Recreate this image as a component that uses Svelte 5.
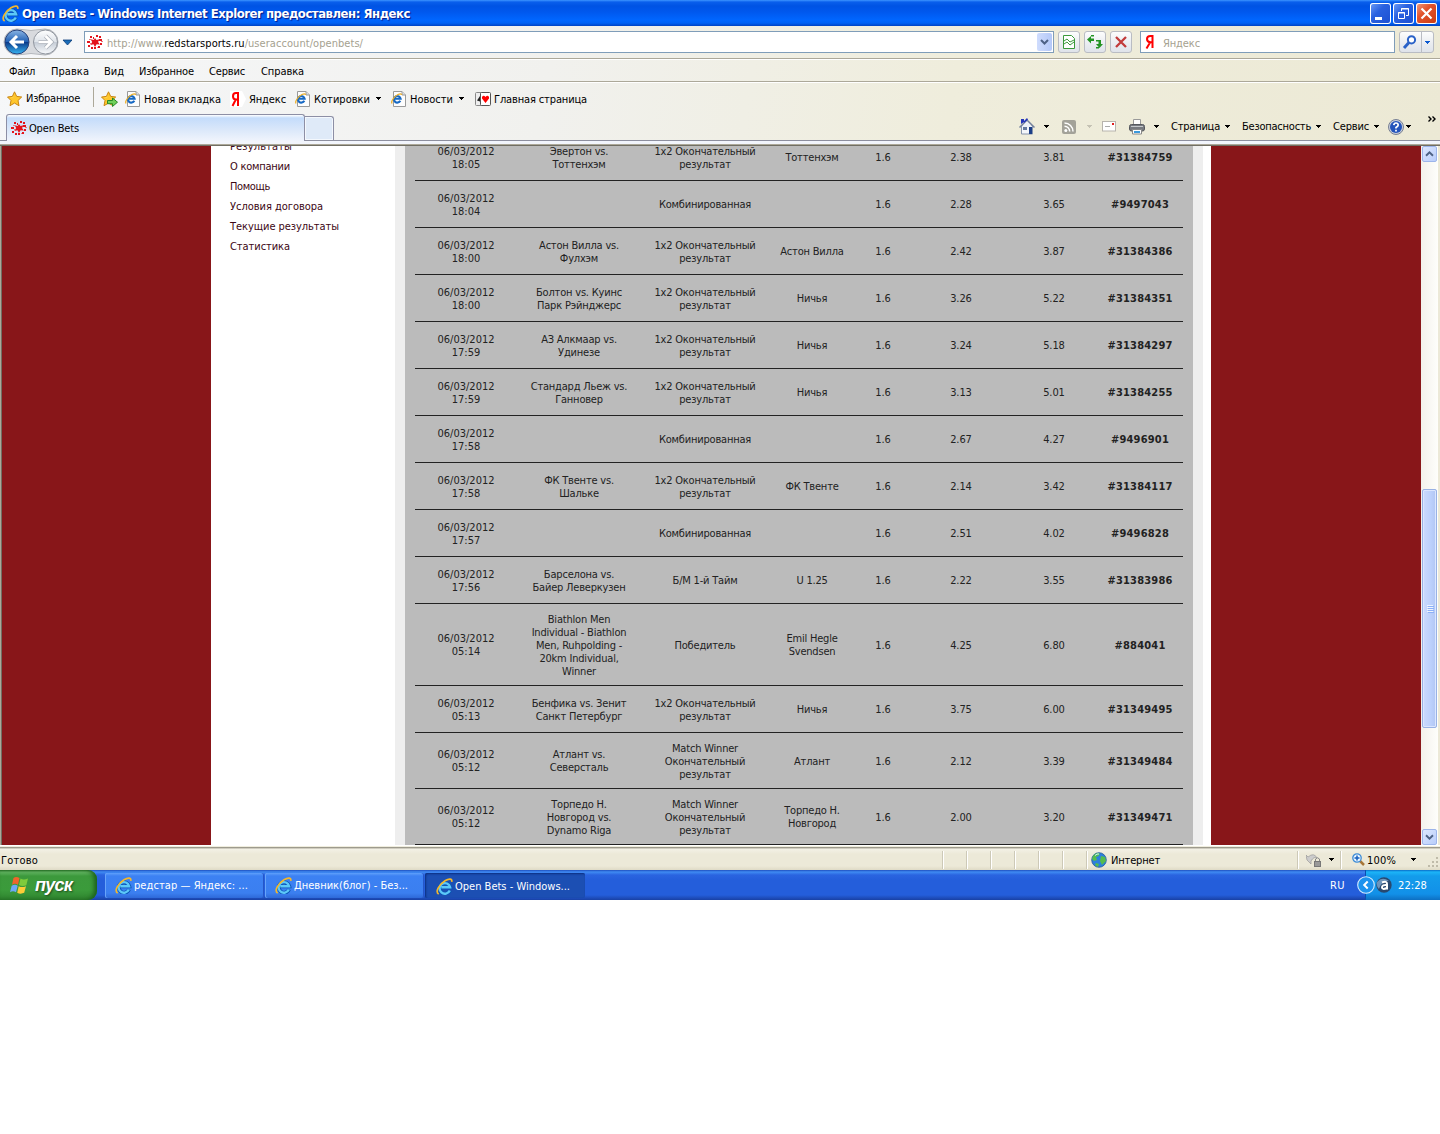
<script>
    // spreads a label over a known width
    function fit(node, width) {
        const range = document.createRange();
        range.selectNodeContents(node);
        const natural = range.getBoundingClientRect().width;
        node.style.letterSpacing = (width - natural) / node.textContent.length + 'px';
    }

    const menu = [
        { text: 'Файл', width: 26, gap: 9 },
        { text: 'Правка', width: 38, gap: 16 },
        { text: 'Вид', width: 20, gap: 15 },
        { text: 'Избранное', width: 55, gap: 15 },
        { text: 'Сервис', width: 36, gap: 15 },
        { text: 'Справка', width: 43, gap: 16 },
    ];

    const favorites = [
        { icon: 'page', text: 'Новая вкладка', width: 77, gap: 7 },
        { icon: 'yandex', text: 'Яндекс', width: 37, gap: 9 },
        { icon: 'page', text: 'Котировки', width: 56, gap: 9, arrow: true },
        { icon: 'page', text: 'Новости', width: 43, gap: 10, arrow: true },
        { icon: 'cards', text: 'Главная страница', width: 93, gap: 11 },
    ];

    const commands = [
        { text: 'Страница', width: 49, gap: 12 },
        { text: 'Безопасность', width: 69, gap: 12 },
        { text: 'Сервис', width: 36, gap: 12 },
    ];

    const sidebar = [
        { text: 'Результаты', width: 62 },
        { text: 'О компании', width: 60 },
        { text: 'Помощь', width: 40 },
        { text: 'Условия договора', width: 93 },
        { text: 'Текущие результаты', width: 109 },
        { text: 'Статистика', width: 60 },
    ];

    const tasks = [
        { text: 'редстар — Яндекс: ...', width: 114 },
        { text: 'Дневник(блог) - Без...', width: 114 },
        { text: 'Open Bets - Windows...', width: 115, active: true },
    ];

    const result = '1x2 Окончательный\nрезультат';
    const winner = 'Match Winner\nОкончательный\nрезультат';
    const combo = 'Комбинированная';

    const bets = [
        ['18:05', 'Эвертон vs.\nТоттенхэм', result, 'Тоттенхэм', '2.38', '3.81', '31384759'],
        ['18:04', '', combo, '', '2.28', '3.65', '9497043'],
        ['18:00', 'Астон Вилла vs.\nФулхэм', result, 'Астон Вилла', '2.42', '3.87', '31384386'],
        ['18:00', 'Болтон vs. Куинс\nПарк Рэйнджерс', result, 'Ничья', '3.26', '5.22', '31384351'],
        ['17:59', 'АЗ Алкмаар vs.\nУдинезе', result, 'Ничья', '3.24', '5.18', '31384297'],
        ['17:59', 'Стандард Льеж vs.\nГанновер', result, 'Ничья', '3.13', '5.01', '31384255'],
        ['17:58', '', combo, '', '2.67', '4.27', '9496901'],
        ['17:58', 'ФК Твенте vs.\nШальке', result, 'ФК Твенте', '2.14', '3.42', '31384117'],
        ['17:57', '', combo, '', '2.51', '4.02', '9496828'],
        ['17:56', 'Барселона vs.\nБайер Леверкузен', 'Б/М 1-й Тайм', 'U 1.25', '2.22', '3.55', '31383986'],
        ['05:14', 'Biathlon Men\nIndividual - Biathlon\nMen, Ruhpolding -\n20km Individual,\nWinner', 'Победитель', 'Emil Hegle\nSvendsen', '4.25', '6.80', '884041'],
        ['05:13', 'Бенфика vs. Зенит\nСанкт Петербург', result, 'Ничья', '3.75', '6.00', '31349495'],
        ['05:12', 'Атлант vs.\nСеверсталь', winner, 'Атлант', '2.12', '3.39', '31349484'],
        ['05:12', 'Торпедо Н.\nНовгород vs.\nDynamo Riga', winner, 'Торпедо Н.\nНовгород', '2.00', '3.20', '31349471'],
    ];
</script>

{#snippet arrow(color = '#000')}
    <svg class="arrow" width="5" height="3" viewBox="0 0 5 3" shape-rendering="crispEdges"><path d="M0 0h5v1h-1v1h-1v1h-1v-1h-1v-1h-1z" fill={color} /></svg>
{/snippet}

{#snippet ie(size)}
    <svg width={size} height={size} viewBox="0 0 16 16">
        <path d="M13.200 11.800A5 5 0 1 1 13.500 8.900H5" fill="none" stroke="#0b55b5" stroke-width="3.600" />
        <path d="M13 11.800A5 5 0 1 1 13.300 8.700H5" fill="none" stroke="#5cc8f8" stroke-width="2.200" />
        <path d="M2.500 15.200C-1 13 3 6 8.500 2.600 12 .4 15.500.2 14.800 3.600" fill="none" stroke="#f3b72c" stroke-width="1.600" />
    </svg>
{/snippet}

{#snippet page()}
    <svg width="16" height="16" viewBox="0 0 16 16">
        <path d="M2.500.5h8.500l3.500 3.500v11.500h-12z" fill="#fdfdfd" stroke="#9a9a9a" />
        <path d="M11 .5v3.500h3.500" fill="#ddd" stroke="#9a9a9a" />
        <path d="M9.300 9.800A3.300 3.300 0 1 1 9.600 7.700H3.500" fill="none" stroke="#1769c4" stroke-width="2.100" />
        <path d="M1 12.500C-.3 10.500 3 5.500 7 3.500 9 2.500 10.500 2.500 10.500 4" fill="none" stroke="#eeb02a" stroke-width="1.300" />
    </svg>
{/snippet}

{#snippet yandex()}
    <svg width="16" height="16" viewBox="0 0 16 16">
        <path d="M0 0h12l4 8-4 8H0z" fill="#fff" />
        <path d="M8 1v14M8.500 2H6Q3 2 3 5.200T6 8.500h2.500M5.800 8.500L2.500 15" fill="none" stroke="#f00" stroke-width="2" />
    </svg>
{/snippet}

{#snippet redstar()}
    <svg width="16" height="16" viewBox="0 0 16 16">
        <path d="M8 4l1.500 2 3-.8-1.400 2.800 1.700 2.500-3.200-.3L8 13l-1.500-2.800-3.200.8 1.900-2.900L3.600 5.300l3.100.7z" fill="#e3141c" />
        <path d="M3 2h2v2H3zM6 3h1v2H6zM9 1h2v2H9zM12 2h2v2h-2zM12 5h3v2h-3zM0 7h3v2H0zM1 11h2v2H1zM13 9h2v2h-2zM4 13h2v2H4zM7 13h2v2H7zM11 12h2v2h-2z" fill="#e3141c" />
        <path d="M2 5h2v1H2zM14 7h2v1h-2zM3 9h1v1H3zM10 13h1v1h-1z" fill="#e8787c" />
    </svg>
{/snippet}

{#snippet star(plus = false)}
    <svg width="17" height="16" viewBox="0 0 17 16">
        <path d="M7.500.8l2.200 4.600 5 .6-3.700 3.500 1 5.200-4.500-2.600L3 14.700 4 9.500.5 6l4.900-.6z" fill="#ffc72c" stroke="#c98512" />
        <path d="M7.500 3L6.300 6.500 3 7l3-.1z" fill="#fff3a0" />
        {#if plus}
            <path d="M6.500 9.500h5v-2.500l5 4.200-5 4.300v-2.800h-5z" fill="#71d05b" stroke="#288a28" />
        {/if}
    </svg>
{/snippet}

{#snippet cards()}
    <svg width="16" height="14" viewBox="0 0 16 14">
        <rect x=".5" y=".5" width="9" height="13" rx="1" fill="#eee" stroke="#888" />
        <path d="M5 4L2 8.500l3 1z" fill="#222" />
        <rect x="5.500" y=".5" width="10" height="13" rx="1" fill="#fff" stroke="#555" />
        <path d="M10.500 11L7 6.500V5q1.500-2.500 3.500 0 2-2.500 3.500 0v1.500z" fill="#f00" />
    </svg>
{/snippet}

<div class="desktop">
    <header class="title">
        {@render ie(17)}
        <span class="caption" use:fit={388}>Open Bets - Windows Internet Explorer предоставлен: Яндекс</span>
        <div class="controls">
            <svg width="21" height="21" viewBox="0 0 21 21"><path d="M5 14h7v3H5z" fill="#fff" /></svg>
            <svg width="21" height="21" viewBox="0 0 21 21"><path d="M8.500 8V5.500h7v7H13M8 6h8" fill="none" stroke="#fff" /><path d="M5.500 9.500h6v6h-6zM5 10h7" fill="none" stroke="#fff" /></svg>
            <svg class="close" width="21" height="21" viewBox="0 0 21 21"><path d="M5.500 5.500l10 10M15.500 5.500l-10 10" stroke="#fff" stroke-width="2.200" /></svg>
        </div>
    </header>

    <div class="toolbars">
        <div class="nav">
            <svg class="travel" width="72" height="30" viewBox="0 0 72 30">
                <defs>
                    <linearGradient id="back" x2="0" y2="1"><stop stop-color="#8bb5e4" /><stop offset=".48" stop-color="#2362b5" /><stop offset=".52" stop-color="#0b3c8c" /><stop offset="1" stop-color="#38b5f2" /></linearGradient>
                    <linearGradient id="fwd" x2="0" y2="1"><stop stop-color="#fff" /><stop offset=".48" stop-color="#dfe4ea" /><stop offset=".52" stop-color="#c5ccd6" /><stop offset="1" stop-color="#f8fafc" /></linearGradient>
                </defs>
                <path d="M17 2q14 3 28 0a13 13 0 0 1 0 26q-14-3-28 0a13 13 0 0 1 0-26z" fill="#d8dade" stroke="#b4b7bc" />
                <circle cx="17" cy="15" r="12" fill="url(#back)" stroke="#28427a" />
                <path d="M17 9l-6 6 6 6M12 15h12" fill="none" stroke="#fff" stroke-width="3" />
                <circle cx="45.500" cy="15" r="12" fill="url(#fwd)" stroke="#8f959e" />
                <path d="M45.500 9l6 6-6 6M51 15H38.500" fill="none" stroke="#a7adb6" stroke-width="4" />
                <path d="M45.500 9l6 6-6 6M51 15H38.500" fill="none" stroke="#fff" stroke-width="2.600" />
                <path d="M63 13h9l-4.500 5z" fill="#1a6cb8" stroke="#0b3c78" stroke-width=".8" />
            </svg>
            <div class="address">
                {@render redstar()}
                <span class="url" use:fit={256}>http://www.<b>redstarsports.ru</b>/useraccount/openbets/</span>
                <svg class="drop" width="15" height="18" viewBox="0 0 15 18"><path d="M4 7l3.500 3.500L11 7" fill="none" stroke="#4d6185" stroke-width="2" /></svg>
            </div>
            <div class="tool">
                <svg width="14" height="16" viewBox="0 0 14 16"><path d="M1.500 1.500h8l3 3v10h-11z" fill="#fff" stroke="#3b9a3b" /><path d="M2 7l3-2 3 3 4-2M2 10l3-2 3 3 4-3" fill="none" stroke="#3b9a3b" /></svg>
            </div>
            <div class="tool">
                <svg width="16" height="16" viewBox="0 0 16 16"><path d="M0 5.500L4 2v2.500h3v2.500H4v2.500zM4 1h3v1.500H4z" fill="#249424" /><path d="M16 10l-3.500 4L9 10h2.500V7.500H9V6h5v4zM9 13h3v1.500H9z" fill="#249424" /></svg>
            </div>
            <div class="tool">
                <svg width="14" height="14" viewBox="0 0 14 14"><path d="M2 2l10 10M12 2L2 12" stroke="#c23b3b" stroke-width="2.300" /></svg>
            </div>
            <div class="search">
                <svg width="10" height="14" viewBox="0 0 10 14"><path d="M7.500 0v13M8 1H5.500Q2 1 2 4t3.500 3.300H8M5.200 7.300L1.500 13.500" fill="none" stroke="#f00" stroke-width="2" /></svg>
                <span use:fit={37}>Яндекс</span>
            </div>
            <div class="go">
                <svg width="21" height="20" viewBox="0 0 21 20"><path d="M4 16l5-5.500" stroke="#2a62c8" stroke-width="3" /><circle cx="11.500" cy="7.800" r="3.600" fill="#fff" stroke="#2a62c8" stroke-width="2" /></svg>
                <i></i>
                {@render arrow('#0a58d0')}
            </div>
        </div>

        <div class="menu">
            {#each menu as item}
                <span style:margin-left="{item.gap}px" style:width="{item.width}px" use:fit={item.width}>{item.text}</span>
            {/each}
        </div>

        <div class="favorites">
            {@render star()}
            <span class="fav-label" use:fit={54}>Избранное</span>
            <i class="separator"></i>
            {@render star(true)}
            {#each favorites as item}
                <span class="favorite" style:margin-left="{item.gap}px">
                    {#if item.icon === 'page'}
                        {@render page()}
                    {:else if item.icon === 'yandex'}
                        {@render yandex()}
                    {:else}
                        {@render cards()}
                    {/if}
                    <span class="text" style:width="{item.width}px" use:fit={item.width}>{item.text}</span>
                    {#if item.arrow}{@render arrow()}{/if}
                </span>
            {/each}
        </div>

        <div class="tabs">
            <div class="tab">{@render redstar()}<span use:fit={50}>Open Bets</span></div>
            <div class="new-tab"></div>
            <div class="commands">
                <svg width="16" height="17" viewBox="0 0 16 17">
                    <path d="M2.500 8h11v8h-11z" fill="#f4f6fa" stroke="#8794ac" />
                    <path d="M2.500 9L8 2.500 13.500 9z" fill="#eef1f7" />
                    <path d="M.5 9.500L8 2l7.500 7.500" fill="none" stroke="#73809c" stroke-width="1.500" />
                    <path d="M2 1h3v3L2 6zM5 3l3-3 1 1.500L5 5z" fill="#2536b8" />
                    <path d="M10 9h3v7h-3z" fill="#1c3f88" /><path d="M4 9h4v3H4z" fill="#667a9e" />
                </svg>
                {@render arrow()}
                <svg class="rss" width="14" height="14" viewBox="0 0 14 14"><rect width="14" height="14" rx="2" fill="#a3a299" /><circle cx="3.800" cy="10.500" r="1.500" fill="#fff" /><path d="M2.500 6.300a5.200 5.200 0 0 1 5.200 5.200M2.500 3a8.500 8.500 0 0 1 8.500 8.500" fill="none" stroke="#fff" stroke-width="1.500" /></svg>
                {@render arrow('#c5c2b4')}
                <svg class="mail" width="14" height="11" viewBox="0 0 14 11"><rect x=".5" y=".5" width="13" height="9.500" fill="#fff" stroke="#b7b4ad" /><path d="M10 2h2v2h-2z" fill="#e02020" /><path d="M3 5.500h5" stroke="#aaa" /></svg>
                <svg class="printer" width="16" height="16" viewBox="0 0 16 16">
                    <path d="M4.500.5h7v6h-7z" fill="#fff" stroke="#999" />
                    <rect x=".5" y="5.500" width="15" height="6.500" rx="2" fill="#777a80" stroke="#55585e" />
                    <path d="M2 7.500h12" stroke="#c5c8cc" />
                    <path d="M3.500 10.500h9v4.500h-9z" fill="#fff" stroke="#888" /><path d="M5 13h6" stroke="#3c9adc" stroke-width="2" />
                </svg>
                {@render arrow()}
                {#each commands as item}
                    <span class="command" style:margin-left="{item.gap}px">
                        <span style:width="{item.width}px" use:fit={item.width}>{item.text}</span>
                        {@render arrow()}
                    </span>
                {/each}
                <svg class="help" width="16" height="16" viewBox="0 0 16 16"><circle cx="8" cy="8" r="7.500" fill="#c9cfdc" stroke="#777f92" /><circle cx="8" cy="8" r="6" fill="#2454bb" /><path d="M5.800 6.200Q6 4 8 4t2.200 2Q10.200 7.300 8 8.500v1M8 10.800v1.700" fill="none" stroke="#fff" stroke-width="1.700" /></svg>
                {@render arrow()}
                <svg class="more" width="8" height="6" viewBox="0 0 8 6"><path d="M.5.5L3 3 .5 5.500M4.500.5L7 3 4.500 5.500" fill="none" stroke="#000" stroke-width="1.400" /></svg>
            </div>
        </div>
        <div class="edge"></div>
    </div>

    <main class="viewport">
        <div class="margin left"></div>
        <nav class="sidebar">
            {#each sidebar as item}
                <a href="#top"><span use:fit={item.width}>{item.text}</span></a>
            {/each}
        </nav>
        <section class="panel">
            {#each bets as [time, event, market, pick, odds, win, id]}
                <div class="bet">
                    <span class="date">06/03/2012{'\n'}{time}</span>
                    <span>{event}</span>
                    <span>{market}</span>
                    <span>{pick}</span>
                    <span class="num">1.6</span>
                    <span class="num">{odds}</span>
                    <span class="num">{win}</span>
                    <strong>#{id}</strong>
                </div>
            {/each}
        </section>
        <div class="margin right"></div>
        <div class="scrollbar">
            <svg class="button" width="15" height="16" viewBox="0 0 15 16"><path d="M3.500 10l4-4 4 4" fill="none" stroke="#4d6185" stroke-width="2.200" /></svg>
            <div class="track">
                <div class="thumb"><i></i><i></i><i></i><i></i></div>
            </div>
            <svg class="button" width="15" height="16" viewBox="0 0 15 16"><path d="M3.500 6l4 4 4-4" fill="none" stroke="#4d6185" stroke-width="2.200" /></svg>
        </div>
    </main>

    <footer class="status">
        <span class="ready" use:fit={37}>Готово</span>
        <div class="cells">
            <i></i><i></i><i></i><i></i><i></i><i></i><i></i>
        </div>
        <svg class="globe" width="16" height="16" viewBox="0 0 16 16"><circle cx="8" cy="8" r="7.300" fill="#2d80dc" stroke="#255a9a" stroke-width=".8" /><path d="M2 4Q5 0 9 1.500L7.500 4 5 5 6 8 3 9 1 7zM10 4l4 1 1 4-4 4-2-4zM5 11l3 1-1 3-3-2z" fill="#55bd4c" /><path d="M4 3.500q2-2 4-1.500" stroke="#c9f0ff" fill="none" /></svg>
        <span class="zone" use:fit={49}>Интернет</span>
        <div class="protect">
            <svg width="16" height="16" viewBox="0 0 16 16"><path d="M1 8l4 4V9q3-5 6-3-3-6-9-1L0 3z" fill="#ccc" stroke="#999" stroke-width=".7" /><rect x="8.500" y="9.500" width="6" height="5" fill="#999" stroke="#777" /><path d="M9.500 9V7q2-2.500 4 0v2" fill="none" stroke="#888" /></svg>
            {@render arrow()}
        </div>
        <div class="zoom">
            <svg width="13" height="13" viewBox="0 0 13 13"><path d="M7.500 7.500l4.500 4.500" stroke="#a77638" stroke-width="2.500" /><circle cx="5" cy="5" r="4.200" fill="#e9f6ff" stroke="#3c8bd6" stroke-width="1.300" /><path d="M5 2.500v5M2.500 5h5" stroke="#1660c0" stroke-width="1.500" /></svg>
            <span use:fit={29}>100%</span>
            {@render arrow()}
            <svg class="grip" width="11" height="11" viewBox="0 0 11 11"><path d="M8 0h2v2H8zM4 4h2v2H4zM8 4h2v2H8zM0 8h2v2H0zM4 8h2v2H4zM8 8h2v2H8z" fill="#bfbba9" /></svg>
        </div>
    </footer>

    <div class="taskbar">
        <div class="start">
            <svg width="20" height="19" viewBox="0 0 20 19">
                <path d="M3.500 2Q6 0 9.500 2L8 8.700Q5 6.700 2 8.700z" fill="#f0642c" />
                <path d="M10.500 2.500Q13.500 4.500 18 2.500L16.300 9.300Q12.500 11 9 9z" fill="#7ecb3c" />
                <path d="M1.700 9.700Q5 8 7.700 9.700L6 16.200Q3 14.300 0 16.200z" fill="#6ea8f8" />
                <path d="M8.700 10.200Q12 12 16 10.200L14.200 16.800Q10.500 18.500 7.200 16.700z" fill="#fdcc38" />
            </svg>
            <span use:fit={37}>пуск</span>
        </div>
        <div class="tasks">
            {#each tasks as task}
                <div class="task" class:active={task.active}>
                    {@render ie(17)}
                    <span use:fit={task.width}>{task.text}</span>
                </div>
            {/each}
        </div>
        <span class="lang" use:fit={15}>RU</span>
        <div class="tray">
            <svg class="expand" width="18" height="18" viewBox="0 0 18 18"><circle cx="9" cy="9" r="8.300" fill="#1d93ee" stroke="#d5edff" stroke-width="1.100" /><path d="M10.700 5.500L7.200 9l3.500 3.500" fill="none" stroke="#fff" stroke-width="2" /></svg>
            <svg width="16" height="16" viewBox="0 0 16 16"><circle cx="8" cy="8" r="7.700" fill="#28486f" /><path d="M1 5q5-6 12-1Q6 3 3 12 0 9 1 5z" fill="#6e94bb" /><path d="M6 5.500q5-2 5 1.500v5.500M11 8Q6 7.500 6 10.300T11 11" fill="none" stroke="#fff" stroke-width="2" /></svg>
            <span use:fit={29}>22:28</span>
        </div>
    </div>
</div>

<style>
    :global(body) {
        background: #fff;
    }
    .desktop {
        width: 1440px;
        height: 1134px;
        overflow: hidden;
        font: 11px/13px "DejaVu Sans Condensed", "DejaVu Sans", sans-serif;
        font-stretch: condensed;
        color: #000;
    }
    .desktop * {
        box-sizing: border-box;
    }
    svg {
        display: block;
        flex: none;
    }
    span {
        white-space: nowrap;
    }
    .title {
        display: flex;
        align-items: center;
        height: 26px;
        padding: 0 3px 0 2px;
        background: linear-gradient(#3d95ff 0, #0a5fec 2px, #0053e4 6px, #0058ee 12px, #0066ff 20px, #0062f5 23px, #0043c4 26px);
    }
    .caption {
        margin-left: 3px;
        color: #fff;
        font-size: 13px;
        font-weight: bold;
        text-shadow: 1px 1px 1px #0a1883;
    }
    .controls {
        display: flex;
        gap: 2px;
        margin-left: auto;
    }
    .controls svg {
        border-radius: 3px;
        box-shadow: inset 0 0 0 1px #fff;
        background: linear-gradient(135deg, #6f9ff8, #2a61e0 40%, #1d4fd0);
    }
    .controls .close {
        background: linear-gradient(135deg, #f0a084, #e2532c 40%, #c83a10);
    }
    .toolbars {
        background: linear-gradient(100deg, #f6f7f9 0, #f1f1ee 38%, #efeddc 66%, #ece9d5 100%);
    }
    .nav {
        display: flex;
        align-items: center;
        height: 33px;
        border-bottom: 1px solid #aca899;
    }
    .travel {
        margin: 0 12px 0 0;
    }
    .address, .search {
        display: flex;
        align-items: center;
        height: 22px;
        border: 1px solid #7f9db9;
        background: #fff;
        color: #a5a190;
    }
    .address {
        width: 970px;
        padding: 0 0 0 2px;
    }
    .url {
        margin: 2px 0 0 4px;
    }
    .url b {
        color: #000;
        font-weight: normal;
    }
    .drop {
        margin: 0 1px 0 auto;
        border-radius: 2px;
        background: linear-gradient(90deg, #cfdcfd, #b4c8f8);
    }
    .tool {
        display: flex;
        align-items: center;
        justify-content: center;
        width: 22px;
        height: 22px;
        margin-left: 4px;
        border: 1px solid #b9bcc3;
        border-radius: 3px;
        background: linear-gradient(#fdfdfd, #eceef2 50%, #dfe3ea);
    }
    .search {
        width: 255px;
        margin-left: 8px;
        padding-left: 4px;
    }
    .search span {
        margin: 2px 0 0 8px;
    }
    .go {
        display: flex;
        align-items: center;
        width: 35px;
        height: 22px;
        margin-left: 4px;
        border: 1px solid #b9bcc3;
        border-radius: 3px;
        background: linear-gradient(#fdfdfd, #eceef2 50%, #dfe3ea);
    }
    .go i {
        width: 1px;
        height: 20px;
        margin-right: 3px;
        background: #b9bcc3;
    }
    .menu {
        display: flex;
        align-items: center;
        height: 23px;
        padding-top: 2px;
        border-top: 1px solid #fff;
        border-bottom: 1px solid #aca899;
    }
    .favorites {
        display: flex;
        align-items: center;
        height: 32px;
        padding-left: 7px;
        border-top: 1px solid #fff;
    }
    .fav-label {
        width: 54px;
        margin: -1px 0 0 2px;
    }
    .separator {
        width: 1px;
        height: 20px;
        margin: -3px 7px 0 13px;
        background: #aca899;
    }
    .favorite {
        display: flex;
        align-items: center;
    }
    .favorite .text {
        margin: 2px 0 0 3px;
    }
    .favorite .arrow {
        margin-left: 6px;
    }
    .tabs {
        display: flex;
        align-items: flex-end;
        height: 27px;
        padding-left: 6px;
        border-bottom: 1px solid #8d8f9f;
    }
    .tab {
        display: flex;
        align-items: center;
        width: 299px;
        height: 27px;
        margin-bottom: -1px;
        padding-left: 4px;
        border: 1px solid #8d8fa5;
        border-bottom: 0;
        border-radius: 3px 3px 0 0;
        background: linear-gradient(#fff 0, #c4dcfb 3px, #dbe8fa 15px, #f0f4fc);
    }
    .tab span {
        margin-left: 2px;
    }
    .new-tab {
        width: 29px;
        height: 24px;
        border: 1px solid #8d8fa5;
        border-left: 0;
        border-bottom: 0;
        border-radius: 0 3px 0 0;
        background: #dfeaf8;
        box-shadow: inset 0 0 0 1px #f4f8fd;
    }
    .commands {
        display: flex;
        align-items: center;
        width: 421px;
        height: 27px;
        margin-left: auto;
    }
    .commands > .arrow {
        margin-left: 9px;
    }
    .rss {
        margin-left: 13px;
    }
    .rss + .arrow {
        margin-left: 11px;
    }
    .commands .mail {
        margin-left: 10px;
    }
    .printer {
        margin-left: 13px;
    }
    .command {
        display: flex;
        align-items: center;
    }
    .command .arrow {
        margin-left: 5px;
    }
    .help {
        margin-left: 9px;
    }
    .commands .help + .arrow {
        margin-left: 2px;
    }
    .more {
        margin: -15px 0 0 17px;
    }
    .edge {
        height: 5px;
        border-bottom: 1px solid #716f64;
        background: linear-gradient(#f2f5fc 3px, #aca899 3px);
    }
    .viewport {
        display: flex;
        height: 699px;
        overflow: hidden;
        border-left: 1px solid #aca899;
        background: #fff;
    }
    .margin {
        width: 210px;
        background: #881619;
    }
    .left {
        border-left: 1px solid #716f64;
    }
    .sidebar {
        width: 184px;
        margin-top: -9px;
        padding-left: 19px;
    }
    .sidebar a {
        display: block;
        height: 20px;
        line-height: 20px;
        color: #3c0714;
        text-decoration: none;
    }
    .panel {
        width: 808px;
        margin-right: 8px;
        padding: 0 10px;
        border: solid #eee;
        border-width: 0 10px;
        background: #bbb;
        color: #222;
    }
    .bet {
        display: grid;
        grid-template-columns: 102px 124px 128px 86px 56px 100px 86px 86px;
        align-items: center;
        min-height: 47px;
        padding: 8.5px 0 7.5px;
        border-bottom: 1px solid #222;
        text-align: center;
    }
    .bet:first-child {
        margin-top: -12px;
    }
    .bet span {
        white-space: pre;
        letter-spacing: -0.2px;
    }
    .bet .date {
        letter-spacing: 0;
    }
    .bet .num {
        letter-spacing: -0.1px;
    }
    .bet strong {
        letter-spacing: 0.2px;
    }
    .scrollbar {
        display: flex;
        flex-direction: column;
        align-items: center;
        width: 19px;
        border-right: 2px solid #ece9d8;
        background: linear-gradient(90deg, #f3f1ec, #fefefb);
    }
    .button {
        border: 1px solid #9cb4ea;
        border-radius: 2px;
        background: linear-gradient(135deg, #dce7ff, #b9cdfb);
    }
    .track {
        flex: 1;
        width: 15px;
    }
    .thumb {
        display: flex;
        flex-direction: column;
        align-items: center;
        justify-content: center;
        gap: 1px;
        height: 239px;
        margin-top: 327px;
        border: 1px solid #98b1e4;
        border-radius: 2px;
        background: linear-gradient(90deg, #cbdafd, #bcd0fc 60%, #b2c6f3);
        box-shadow: inset 0 0 0 1px #dbe6ff;
    }
    .thumb i {
        width: 6px;
        height: 1px;
        background: #eef4fe;
        box-shadow: 1px 1px #8cb0f8;
    }
    .status {
        display: flex;
        align-items: center;
        height: 25px;
        padding-top: 4px;
        background: linear-gradient(#fff 1px, #f3f1e4 1px, #ece9d8 2px, #8f8d80 2px, #aca899 3px, #f3f1e6 4px, #ece9d8 9px, #ece9d8 21px, #dedac6 25px);
    }
    .status span {
        margin-top: 1px;
    }
    .ready {
        width: 37px;
        margin-left: 1px;
    }
    .cells {
        display: flex;
        gap: 22px;
        margin-left: 904px;
    }
    .cells i {
        width: 2px;
        height: 18px;
        border-left: 1px solid #cdc9b7;
        border-right: 1px solid #fff;
    }
    .globe {
        margin-left: 3px;
    }
    .zone {
        width: 49px;
        margin-left: 4px;
    }
    .protect, .zoom {
        display: flex;
        align-items: center;
        height: 18px;
        border-left: 1px solid #cdc9b7;
        box-shadow: inset 1px 0 #fff;
    }
    .protect {
        width: 43px;
        margin-left: 137px;
        padding-left: 8px;
    }
    .protect .arrow {
        margin-left: 7px;
    }
    .zoom {
        padding-left: 11px;
    }
    .zoom span {
        width: 29px;
        margin-left: 2px;
    }
    .zoom .arrow {
        margin-left: 15px;
    }
    .grip {
        margin: 6px 0 0 12px;
    }
    .taskbar {
        display: flex;
        height: 30px;
        color: #fff;
        background: linear-gradient(#1f50c0 0, #3f8bf3 2px, #2a64e0 5px, #245edb 10px, #245edb 25px, #1941a5 30px);
    }
    .start {
        display: flex;
        align-items: center;
        width: 97px;
        padding-left: 10px;
        border-radius: 0 9px 9px 0;
        background: linear-gradient(#2e7a2e 0, #66b865 2px, #3c993c 6px, #3b9b3b 20px, #2f832f 30px);
        box-shadow: inset -3px 0 4px #1c611c;
        font: italic bold 18px/20px "Liberation Sans", Arial, sans-serif;
        text-shadow: 1px 1px 2px #1d4a1d;
    }
    .start span {
        margin-left: 5px;
    }
    .tasks {
        display: flex;
        gap: 1px;
        margin-left: 8px;
    }
    .task {
        display: flex;
        align-items: center;
        width: 159px;
        height: 25px;
        margin-top: 3px;
        padding-left: 10px;
        border-radius: 2px;
        background: linear-gradient(#5fa0fb 0, #3c81f3 3px, #3b7ff0 20px, #2e69d8);
        box-shadow: inset 1px 0 #68a4fa, inset -1px 0 #2556c8;
    }
    .task.active {
        width: 160px;
        padding-top: 2px;
        padding-left: 11px;
        background: #1c4fb3;
        box-shadow: inset 1px 1px 2px #0c2f80;
    }
    .task span {
        margin-left: 2px;
    }
    .lang {
        width: 15px;
        margin: 9px 0 0 745px;
    }
    .tray {
        display: flex;
        align-items: center;
        width: 75px;
        margin-left: auto;
        border-left: 1px solid #0b4fae;
        background: linear-gradient(#0a6cc8 0, #1cb5f8 2px, #139ceb 6px, #1290e8 24px, #0d6fc2 30px);
    }
    .expand {
        margin-left: -9px;
    }
    .tray svg + svg {
        margin-left: 1px;
    }
    .tray span {
        margin-left: 6px;
    }
</style>
